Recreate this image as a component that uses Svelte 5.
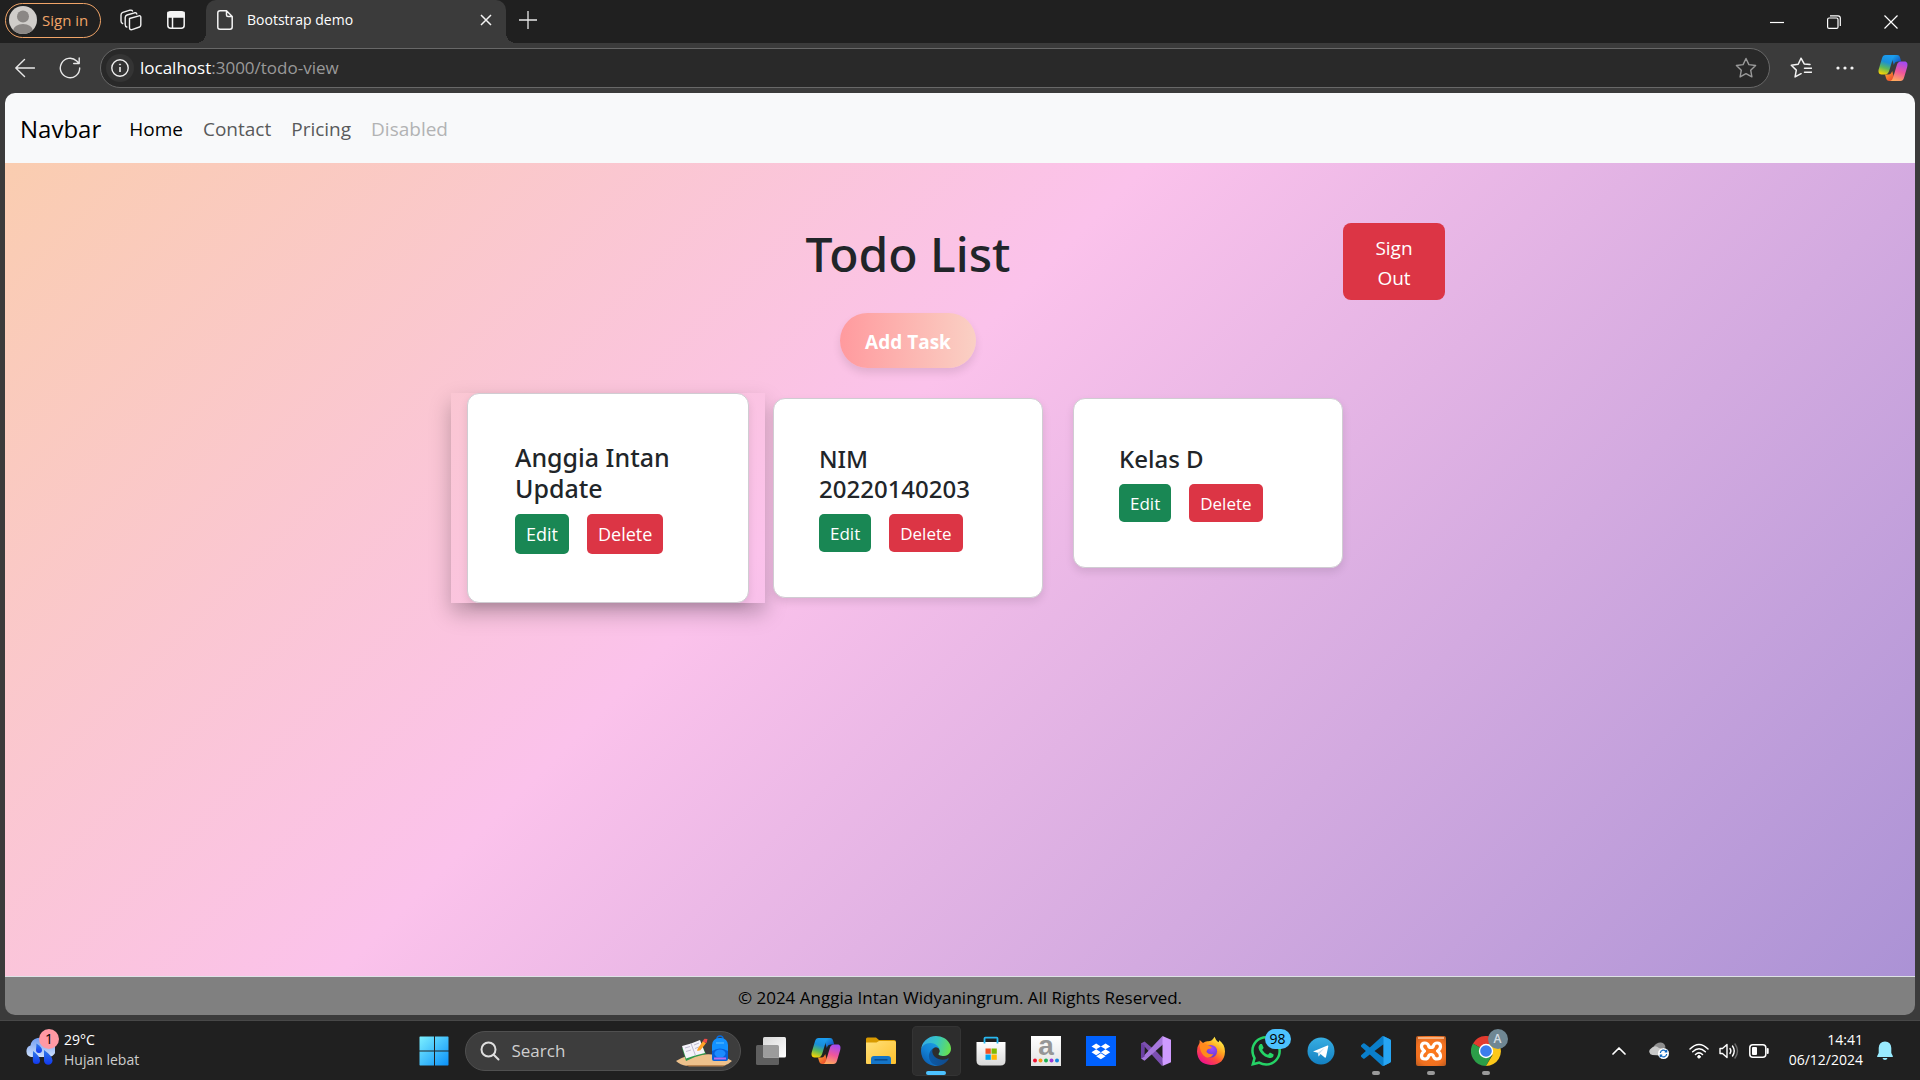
<script>
  const navLinks = [
    { label: 'Home', state: 'active' },
    { label: 'Contact', state: '' },
    { label: 'Pricing', state: '' },
    { label: 'Disabled', state: 'disabled' }
  ];
  const tasks = [
    { title: 'Anggia Intan Update', lifted: true },
    { title: 'NIM 20220140203', lifted: false },
    { title: 'Kelas D', lifted: false }
  ];
</script>

{#snippet copilot(id)}
  <svg class="copilot" viewBox="0 0 30 28" aria-hidden="true">
    <defs>
      <linearGradient id="{id}a" x1="0.5" y1="0" x2="0.2" y2="1">
        <stop offset="0" stop-color="#1b9cf0" /><stop offset=".35" stop-color="#1a8fd8" />
        <stop offset=".65" stop-color="#5cb85a" /><stop offset="1" stop-color="#ffd400" />
      </linearGradient>
      <linearGradient id="{id}b" x1="0.6" y1="0" x2="0.3" y2="1">
        <stop offset="0" stop-color="#a64af0" /><stop offset=".5" stop-color="#f0569a" />
        <stop offset="1" stop-color="#ffac5c" />
      </linearGradient>
      <linearGradient id="{id}c" x1="0" y1="0" x2="1" y2="1">
        <stop offset="0" stop-color="#1cb7f2" /><stop offset="1" stop-color="#1238b8" />
      </linearGradient>
      <linearGradient id="{id}d" x1="0" y1="0" x2="1" y2="1">
        <stop offset="0" stop-color="#ffb02e" /><stop offset="1" stop-color="#e6342e" />
      </linearGradient>
    </defs>
    <path d="M13 1h6c2 0 2.600 1 3.200 3l1 3.500H20c-2 0-3.500 1-4.200 3.500L14 5z" fill="url(#{id}c)" />
    <path d="M17 27h-5.500c-2.200 0-2.900-1-3.500-3l-1-3.600h3.500c2 0 3-1.400 3.700-3.400L16 23z" fill="url(#{id}d)" />
    <path d="M7.500 1H18c-1.800.3-2.600 2-3.300 4.300l-3.500 11.500c-.7 2.400-2 3.600-4.200 3.600H3.400C.8 20.400 0 18 .8 15L4 4.200C4.700 2 5.800 1 7.500 1z" fill="url(#{id}a)" />
    <path d="M22.500 27H12c1.800-.3 2.600-2 3.300-4.300l3.500-11.500c.7-2.400 2-3.600 4.200-3.600h3.600c2.600 0 3.400 2.400 2.600 5.400L26 23.800c-.7 2.200-1.800 3.200-3.500 3.200z" fill="url(#{id}b)" />
  </svg>
{/snippet}

<div class="desktop">
  <header class="tabstrip">
    <button class="signin">
      <svg viewBox="0 0 28 28" width="28" height="28" aria-hidden="true">
        <clipPath id="face"><circle cx="14" cy="14" r="14" /></clipPath>
        <g clip-path="url(#face)">
          <rect width="28" height="28" fill="#d0cdca" />
          <circle cx="14" cy="10.500" r="6" fill="#8b8785" />
          <ellipse cx="14" cy="25" rx="10" ry="7" fill="#8b8785" />
        </g>
      </svg>
      <span>Sign in</span>
    </button>
    <button class="bare workspaces" aria-label="Workspaces">
      <svg viewBox="0 0 22 22" width="22" height="22" fill="none" stroke="#f0f0f0" stroke-width="1.400" stroke-linejoin="round" stroke-linecap="round">
        <path d="M9.500 9.500 L19 6.800 Q20.800 6.500 20.800 8.300 V16 Q20.800 17.400 19.500 18 L12 20.600 Q9.500 21.200 9.500 18.500z" />
        <path d="M6.800 18 Q5.200 17.600 5.200 15.500 V8.500 Q5.200 6.800 7 6 L14.500 3.800 Q16.500 3.300 16.800 5" />
        <path d="M2.600 14.500 Q1 14 1 12 V6 Q1 4 2.800 3.400 L10 1.200 Q12 .8 12.500 2" />
      </svg>
    </button>
    <button class="bare actions" aria-label="Tab actions menu">
      <svg viewBox="0 0 18 18" width="18" height="18" fill="none" stroke="#f4f4f4" stroke-width="1.500">
        <rect x=".8" y=".8" width="16.400" height="16.400" rx="3" />
        <path d="M1 1.500h16v4.500h-16z" fill="#f4f4f4" /><path d="M5.500 6v11" />
      </svg>
    </button>
    <div class="tab">
      <svg viewBox="0 0 16 20" width="16" height="20" fill="none" stroke="#f4f4f4" stroke-width="1.500" stroke-linejoin="round" aria-hidden="true">
        <path d="M3 .8h6.500L15.200 6.500V17q0 2.200-2.200 2.200H3Q.8 19.200.8 17V3Q.8.8 3 .8zM9.500 1v4q0 1.500 1.500 1.500h4" />
      </svg>
      <span>Bootstrap demo</span>
      <button class="bare" aria-label="Close tab">
        <svg viewBox="0 0 12 12" width="12" height="12" stroke="#f4f4f4" stroke-width="1.500"><path d="M1 1l10 10M11 1L1 11" /></svg>
      </button>
    </div>
    <button class="bare newtab" aria-label="New tab">
      <svg viewBox="0 0 18 18" width="18" height="18" stroke="#e8e8e8" stroke-width="1.300"><path d="M9 0v18M0 9h18" /></svg>
    </button>
    <div class="window-controls">
      <button class="bare" aria-label="Minimize"><svg viewBox="0 0 14 14" width="14" height="14" stroke="#fff" stroke-width="1.200"><path d="M0 7.500h14" /></svg></button>
      <button class="bare" aria-label="Restore"><svg viewBox="0 0 14 14" width="14" height="14" stroke="#fff" stroke-width="1.200" fill="none"><rect x=".6" y="3" width="10.400" height="10.400" rx="1.500" /><path d="M3 .8h8q2.300 0 2.300 2.300v8" /></svg></button>
      <button class="bare" aria-label="Close"><svg viewBox="0 0 14 14" width="14" height="14" stroke="#fff" stroke-width="1.200"><path d="M.5.500l13 13M13.500.500l-13 13" /></svg></button>
    </div>
  </header>

  <div class="toolbar">
    <button class="bare" aria-label="Back">
      <svg viewBox="0 0 20 20" width="20" height="20" stroke="#e8e8e8" stroke-width="1.400" fill="none" stroke-linecap="round" stroke-linejoin="round"><path d="M19.500 10H.8M9.500 1.500L.8 10l8.700 8.500" /></svg>
    </button>
    <button class="bare refresh" aria-label="Refresh">
      <svg viewBox="0 0 22 22" width="22" height="22" stroke="#e8e8e8" stroke-width="1.400" fill="none" stroke-linecap="round" stroke-linejoin="round"><path d="M20.700 11a9.700 9.700 0 1 1-3-7l2.300 2.300M20.200 1v5.500h-5.500" /></svg>
    </button>
    <div class="address">
      <button class="info" aria-label="View site information">
        <svg viewBox="0 0 18 18" width="18" height="18" fill="none" stroke="#f0f0f0" stroke-width="1.400"><circle cx="9" cy="9" r="8.200" /><path d="M9 8v5" stroke-width="1.600" /><circle cx="9" cy="5.500" r=".6" fill="#f0f0f0" stroke-width=".8" /></svg>
      </button>
      <a class="url" href="#top" aria-label="localhost:3000/todo-view"><b>localhost</b>:3000/todo-view</a>
      <button class="bare" aria-label="Add to favorites">
        <svg viewBox="0 0 22 22" width="22" height="22" fill="none" stroke="#9a9a9a" stroke-width="1.400" stroke-linejoin="round"><path d="M11 1.500l2.900 6.100 6.700.9-4.900 4.700 1.200 6.700-5.900-3.200-5.900 3.200 1.200-6.700L1.400 8.500l6.700-.9z" /></svg>
      </button>
    </div>
    <div class="tools">
      <button class="bare" aria-label="Favorites">
        <svg viewBox="0 0 22 22" width="22" height="22" fill="none" stroke="#f4f4f4" stroke-width="1.500" stroke-linejoin="round" stroke-linecap="round"><path d="M20 7.500l-5.800-.6L11 1.200 8.200 7.300l-6.900 1 5 4.800-1.200 6.800 6-3.200M14.500 11.200h7M14.500 15.200h7" /></svg>
      </button>
      <button class="bare" aria-label="Settings and more">
        <svg viewBox="0 0 18 4" width="18" height="4" fill="#f4f4f4"><circle cx="2" cy="2" r="1.600" /><circle cx="9" cy="2" r="1.600" /><circle cx="16" cy="2" r="1.600" /></svg>
      </button>
      <button class="bare" aria-label="Copilot">{@render copilot('side')}</button>
    </div>
  </div>

  <div class="page" id="top">
    <nav class="navbar">
      <a class="brand" href="#top">Navbar</a>
      {#each navLinks as link}
        <a class="nav-link {link.state}" href="#top">{link.label}</a>
      {/each}
    </nav>
    <main>
      <div class="container">
        <section class="board">
          <h1>Todo List</h1>
          <button class="add">Add Task</button>
          <div class="cards">
            {#each tasks as task}
              <div class="column" class:lifted={task.lifted}>
                <article class="card">
                  <h2>{task.title}</h2>
                  <div class="buttons">
                    <button class="btn edit">Edit</button>
                    <button class="btn delete">Delete</button>
                  </div>
                </article>
              </div>
            {/each}
          </div>
        </section>
        <button class="signout">Sign Out</button>
      </div>
    </main>
    <footer>© 2024 Anggia Intan Widyaningrum. All Rights Reserved.</footer>
  </div>

  <div class="taskbar">
    <button class="weather">
      <span class="weather-icon">
        <svg viewBox="0 0 30 28" width="30" height="28" aria-hidden="true">
          <defs>
            <linearGradient id="cloud" x1="0" y1="0" x2="0" y2="1"><stop offset="0" stop-color="#6f9cf2" /><stop offset="1" stop-color="#cfe0fb" /></linearGradient>
            <linearGradient id="drop" x1="0" y1="0" x2="0" y2="1"><stop offset="0" stop-color="#2e7ae8" /><stop offset="1" stop-color="#1238f0" /></linearGradient>
          </defs>
          <path d="M6 20a6 6 0 0 1-.5-11.500A9 9 0 0 1 22 5a7.500 7.500 0 0 1 2.500 15z" fill="url(#cloud)" />
          <path d="M8 14q7 5 7 9.500a3.600 3.600 0 0 1-7.200 0z" fill="url(#drop)" />
          <path d="M19 13q8.500 6 8.500 10.500a4.200 4.200 0 0 1-8.500 0z" fill="url(#drop)" />
          <path d="M11.500 6.500q5.500 3.500 5.500 6.500a3 3 0 0 1-6 0z" fill="url(#drop)" />
        </svg>
        <span class="badge alert">1</span>
      </span>
      <span class="lines"><span>29°C</span><span class="dim">Hujan lebat</span></span>
    </button>

    <div class="apps">
      <button class="app" aria-label="Start">
        <svg viewBox="0 0 30 30" width="30" height="30">
          <defs><linearGradient id="win" x1="0" y1="0" x2="1" y2="1"><stop offset="0" stop-color="#7cf0ff" /><stop offset="1" stop-color="#0a90f8" /></linearGradient></defs>
          <path fill="url(#win)" d="M1 .5h14v14H.5V1zM16 .5h13l.5.500v13.500H16zM.5 15.500H15v14H1l-.5-.5zM16 15.500h13.500V29l-.5.500H16z" />
        </svg>
      </button>
      <label class="search">
        <svg viewBox="0 0 20 20" width="20" height="20" fill="none" stroke="#dedede" stroke-width="2" stroke-linecap="round" aria-hidden="true"><circle cx="8.500" cy="8.500" r="7" /><path d="M13.700 13.700l4.800 4.800" /></svg>
        <input type="text" placeholder="Search" aria-label="Search" />
        <svg viewBox="0 0 58 32" width="58" height="32" aria-hidden="true">
          <path d="M1 26Q14 18 28 19.500 46 18 57 26 53 30 48 31H12Q5 30 1 26z" fill="#edc18c" />
          <path d="M10 30h41l-3 1.500H14z" fill="#b98450" />
          <path d="M7 13l10-2 8-5 6 13-11 3-9 4z" fill="#2f9a4c" />
          <path d="M7 11l9-2.500L25 5l5 13-10 2.500-9 3z" fill="#f5f3fa" />
          <path d="M16 8.500l4.500 12M10 13l5-1.500M11 16.500l5-1.500M19 10l5-2M20 13.500l5-2" stroke="#b8b3cc" stroke-width=".9" />
          <path d="M22.500 14L28 6l3 2.300-5.600 6.900-3.200.8z" fill="#ffa326" /><path d="M27.500 6.500l2-2.700 3 .3-.9 4z" fill="#f04c48" />
          <path d="M42 4q0-3 3-3t3 3" fill="none" stroke="#0b6ad8" stroke-width="1.500" />
          <rect x="37" y="3" width="16" height="23" rx="7" fill="#1291ff" /><path d="M37 16q8-5 16 0v8q0 2-2 2H39q-2 0-2-2z" fill="#0760dc" />
          <ellipse cx="45" cy="18.500" rx="5.500" ry="4" fill="#1c8bff" /><path d="M39 22.500h12v2H39z" fill="#b46cf0" /><path d="M41 8h8" stroke="#63c4ff" />
        </svg>
      </label>
      <button class="app" aria-label="Task view">
        <svg viewBox="0 0 30 28" width="30" height="28">
          <defs><linearGradient id="tv" x1="0" y1="0" x2="1" y2="1"><stop offset="0" stop-color="#d8d8d8" /><stop offset="1" stop-color="#fff" /></linearGradient></defs>
          <rect y="8" width="23" height="20" rx="1.500" fill="#5f5f5f" /><rect x="7" width="23" height="20.500" rx="1.500" fill="url(#tv)" /><path d="M7 8h14.500q1.500 0 1.500 1.500v11H8.500Q7 20.500 7 19z" fill="#9c9c9c" />
        </svg>
      </button>
      <button class="app" aria-label="Copilot">{@render copilot('dock')}</button>
      <button class="app" aria-label="File Explorer">
        <svg viewBox="0 0 30 27" width="30" height="27">
          <defs><linearGradient id="fold" x1="0" y1="0" x2="1" y2="1"><stop offset="0" stop-color="#ffe07a" /><stop offset="1" stop-color="#ffc12c" /></linearGradient></defs>
          <path d="M0 2q0-1.500 1.500-1.500h8.500l3 2.500H28q2 0 2 2v6H0z" fill="#d99a00" />
          <path d="M0 5.500h10.500L13 4h15.500Q30 4 30 5.500V26q0 .9-1 .9H1q-1 0-1-.9z" fill="url(#fold)" />
          <path d="M5 27v-5q0-3 3-3h14q3 0 3 3v5z" fill="#1575c8" /><path d="M8.500 22.800h13" stroke="#0a4a8c" stroke-width="1.500" />
        </svg>
      </button>
      <button class="app current" aria-label="Microsoft Edge">
        <svg viewBox="0 0 256 256" width="30" height="30">
          <defs>
            <linearGradient id="e1" x1=".1" y1=".6" x2="1" y2=".6"><stop offset="0" stop-color="#0c59a4" /><stop offset="1" stop-color="#114a8b" /></linearGradient>
            <linearGradient id="e2" x1=".9" y1=".1" x2=".3" y2="1"><stop offset="0" stop-color="#1b9de2" /><stop offset=".5" stop-color="#1383d6" /><stop offset="1" stop-color="#0b5db0" /></linearGradient>
            <linearGradient id="e3" x1="0" y1=".3" x2="1" y2=".5"><stop offset="0" stop-color="#35a8e8" /><stop offset=".5" stop-color="#36c6c4" /><stop offset="1" stop-color="#68e04e" /></linearGradient>
          </defs>
          <path fill="url(#e1)" d="M231 190.500c-3.400 1.800-6.900 3.400-10.500 4.700a101.800 101.800 0 0 1-35.900 6.400c-47.300 0-88.500-32.500-88.500-74.300a31.500 31.500 0 0 1 16.400-27.300c-42.800 1.800-53.800 46.400-53.800 72.500 0 73.900 68.100 81.400 82.800 81.400 7.900 0 19.800-2.300 27-4.600l1.300-.4a128.300 128.300 0 0 0 66.600-52.800 4 4 0 0 0-5.400-5.600z" />
          <path fill="url(#e2)" d="M105.700 241.400a79.200 79.200 0 0 1-22.700-21.300 80.700 80.700 0 0 1 29.500-120c3.200-1.500 8.500-4.100 15.600-4a32.400 32.400 0 0 1 25.700 13 31.900 31.900 0 0 1 6.300 18.700c0-.2 24.500-79.600-80-79.600-43.900 0-80 41.600-80 78.200a130.200 130.200 0 0 0 12.100 56 128 128 0 0 0 156.400 67 75.500 75.500 0 0 1-62.800-8z" />
          <path fill="url(#e3)" d="M152.300 148.900c-.8 1-3.300 2.500-3.300 5.700 0 2.600 1.700 5.100 4.700 7.200 14.400 10 41.500 8.700 41.600 8.700a59.600 59.600 0 0 0 30.300-8.300 61.400 61.400 0 0 0 30.400-52.900c.3-22.400-8-37.300-11.300-43.900C223.500 23.900 177.700 0 128 0A128 128 0 0 0 0 126.200c.5-36.500 36.800-66 80-66 3.500 0 23.500.3 42 10a72.600 72.600 0 0 1 30.900 29.300c6.100 10.600 7.200 24.100 7.200 29.500s-2.700 13.300-7.800 19.900z" />
        </svg>
      </button>
      <button class="app" aria-label="Microsoft Store">
        <svg viewBox="0 0 30 30" width="30" height="30">
          <defs><linearGradient id="bag" x1="0" y1="0" x2="0" y2="1"><stop offset="0" stop-color="#fff" /><stop offset="1" stop-color="#d9d9d9" /></linearGradient></defs>
          <path d="M.5 6h29v18.500q0 5-5 5h-19q-5 0-5-5z" fill="url(#bag)" />
          <path d="M8.500 7.500V2.500q0-.8.800-.8h11.400q.8 0 .8.800v5" fill="none" stroke="#28b8f0" stroke-width="1.800" />
          <path d="M9.500 12.500h5.300v5.300H9.500z" fill="#f25022" /><path d="M15.500 12.500h5.300v5.300h-5.300z" fill="#7fba00" /><path d="M9.500 18.500h5.300v5.300H9.500z" fill="#00a4ef" /><path d="M15.500 18.500h5.300v5.300h-5.300z" fill="#ffb900" />
        </svg>
      </button>
      <button class="app" aria-label="Amazon">
        <svg class="a-tile" viewBox="0 0 30 30" width="30" height="30">
          <defs><linearGradient id="tile" x1="0" y1="0" x2="0" y2="1"><stop offset="0" stop-color="#fff" /><stop offset="1" stop-color="#e2e2e2" /></linearGradient></defs>
          <rect width="30" height="30" fill="url(#tile)" />
          <text class="a-logo" x="15" y="19" text-anchor="middle">a</text>
          <circle cx="4" cy="24.500" r="2" fill="#f01030" /><circle cx="9.500" cy="24.500" r="2" fill="#f59a18" /><circle cx="15" cy="24.500" r="2" fill="#1bb050" /><circle cx="20.500" cy="24.500" r="2" fill="#9a3ad8" /><circle cx="26" cy="24.500" r="2" fill="#1488e0" />
        </svg>
      </button>
      <button class="app" aria-label="Dropbox">
        <svg viewBox="0 0 30 30" width="30" height="30">
          <rect width="30" height="30" fill="#0061fe" />
          <path transform="translate(5.500 6) scale(.78)" fill="#fff" d="M6 1.807L0 5.629l6 3.822 6.001-3.822L6 1.807zM18 1.807l-6 3.822 6 3.822 6-3.822-6-3.822zM0 13.274l6 3.822 6.001-3.822L6 9.452l-6 3.822zM18 9.452l-6 3.822 6 3.822 6-3.822-6-3.822zM6 18.371l6.001 3.822 6-3.822-6-3.822L6 18.371z" />
        </svg>
      </button>
      <button class="app" aria-label="Visual Studio">
        <svg viewBox="0 0 30 30" width="30" height="30">
          <path d="M0 7.500l3.500-2L16 16l6.500 7-1.500 7L3.500 10.500 3 20 0 22z" fill="#7b4fb0" />
          <path d="M0 22.500l3.500 2.200L23 7.500 21.500 0 3 19.500z" fill="#a678dc" />
          <path d="M0 7.500l3.500 1.800v11.400L0 22.500z" fill="#6a3fa2" />
          <path d="M21.500 0L30 3.800v22.400L21.500 30z" fill="#cf9bff" />
        </svg>
      </button>
      <button class="app" aria-label="Firefox">
        <svg viewBox="0 0 30 30" width="30" height="30">
          <defs>
            <linearGradient id="fox" x1=".85" y1=".1" x2=".25" y2=".95"><stop offset="0" stop-color="#fff24a" /><stop offset=".35" stop-color="#ffa51f" /><stop offset=".65" stop-color="#ff4f3a" /><stop offset="1" stop-color="#f0128c" /></linearGradient>
            <radialGradient id="globe" cx=".6" cy=".3" r=".8"><stop offset="0" stop-color="#a04cff" /><stop offset="1" stop-color="#5a35c8" /></radialGradient>
          </defs>
          <path d="M18.500.8q1 3 3.800 5.500 1-.6.800-2Q28.800 8 29 15.500 28.500 28.500 15 29 1.500 28 1 15.500.9 10.500 3.500 7l.2-3 3.300 3q2.500-2 5-1.700Q16 5.500 18.500.8z" fill="url(#fox)" />
          <circle cx="14.800" cy="15.300" r="6.300" fill="url(#globe)" />
          <path d="M3.500 8Q8 6.500 12 9.500q3 .5 4 2-1.500 1.500-4 1.500-1.500 1.500-1.500 3Q13 19 17.500 18q-3 5-8 3Q4 18 3.500 8z" fill="#ff8a1c" />
        </svg>
      </button>
      <button class="app" aria-label="WhatsApp, 98 unread">
        <svg viewBox="0 0 24 24" width="30" height="30"><path fill="#25d366" d="M17.472 14.382c-.297-.149-1.758-.867-2.030-.967-.273-.099-.471-.148-.67.150-.197.297-.767.966-.94 1.164-.173.199-.347.223-.644.075-.297-.15-1.255-.463-2.390-1.475-.883-.788-1.480-1.761-1.653-2.059-.173-.297-.018-.458.13-.606.134-.133.298-.347.446-.52.149-.174.198-.298.298-.497.099-.198.050-.371-.025-.52-.075-.149-.669-1.612-.916-2.207-.242-.579-.487-.5-.669-.51-.173-.008-.371-.01-.57-.01-.198 0-.52.074-.792.372-.272.297-1.040 1.016-1.040 2.479 0 1.462 1.065 2.875 1.213 3.074.149.198 2.096 3.200 5.077 4.487.709.306 1.262.489 1.694.625.712.227 1.360.195 1.871.118.571-.085 1.758-.719 2.006-1.413.248-.694.248-1.289.173-1.413-.074-.124-.272-.198-.57-.347m-5.421 7.403h-.004a9.870 9.870 0 0 1-5.031-1.378l-.361-.214-3.741.982.998-3.648-.235-.374a9.860 9.860 0 0 1-1.510-5.260c.001-5.450 4.436-9.884 9.888-9.884 2.640 0 5.122 1.030 6.988 2.898a9.825 9.825 0 0 1 2.893 6.994c-.003 5.450-4.437 9.884-9.885 9.884m8.413-18.297A11.815 11.815 0 0 0 12.050 0C5.495 0 .16 5.335.157 11.892c0 2.096.547 4.142 1.588 5.945L.057 24l6.305-1.654a11.882 11.882 0 0 0 5.683 1.448h.005c6.554 0 11.890-5.335 11.893-11.893a11.821 11.821 0 0 0-3.480-8.413z" /></svg>
        <span class="badge unread">98</span>
      </button>
      <button class="app" aria-label="Telegram">
        <svg viewBox="0 0 28 28" width="28" height="28">
          <defs><linearGradient id="tg" x1="0" y1="0" x2="0" y2="1"><stop offset="0" stop-color="#37aee2" /><stop offset="1" stop-color="#1380c2" /></linearGradient></defs>
          <circle cx="14" cy="14" r="13.500" fill="url(#tg)" /><path d="M6 14.500L20.500 8.500q1-.3.800.8L19 20q-.3 1-1.300.5L13.500 17l-1.800 2.500-.9-3.800z" fill="#fff" /><path d="M10.800 15.700l7-5-5 5.500-1.100 3.300z" fill="#c2dcee" />
        </svg>
      </button>
      <button class="app running" aria-label="Visual Studio Code">
        <svg viewBox="0 0 24 24" width="30" height="30">
          <path fill="#0a7fcb" d="M23.150 2.587L18.210.210a1.494 1.494 0 0 0-1.705.290l-9.460 8.630-4.120-3.128a.999.999 0 0 0-1.276.057L.327 7.261A1 1 0 0 0 .326 8.740L3.899 12 .326 15.260a1 1 0 0 0 .001 1.479L1.650 17.940a.999.999 0 0 0 1.276.057l4.120-3.128 9.460 8.630a1.492 1.492 0 0 0 1.704.290l4.942-2.377A1.500 1.500 0 0 0 24 20.060V3.939a1.500 1.500 0 0 0-.85-1.352zm-5.146 14.861L10.826 12l7.178-5.448v10.896z" />
          <path fill="#27a5f3" d="M18 .1l5.150 2.487q.85.400.85 1.352V20.060q0 .94-.85 1.350L18 23.900z" />
        </svg>
      </button>
      <button class="app running" aria-label="XAMPP Control Panel">
        <svg viewBox="0 0 30 30" width="30" height="30">
          <defs><radialGradient id="xa" cx=".5" cy=".5" r=".7"><stop offset="0" stop-color="#ff7c1c" /><stop offset=".7" stop-color="#f07020" /><stop offset="1" stop-color="#b85a20" /></radialGradient></defs>
          <rect width="30" height="30" rx="2" fill="url(#xa)" /><path d="M2 1h26v2H2z" fill="#f4b080" />
          <path d="M12.500 9.500Q11.500 7 8.800 7 5.500 7 5.500 10.500q0 2.500 3 4.500-3 2-3 5 0 3 3.500 3 2.700 0 3.500-2.500.5-2 2.500-2t2.500 2Q18.300 23 21 23q3.500 0 3.500-3 0-3-3-5 3-2 3-4.500Q24.500 7 21.200 7q-2.700 0-3.700 2.500-.5 2-2.500 2t-2.500-2z" fill="none" stroke="#fff" stroke-width="3.200" stroke-linejoin="round" />
        </svg>
      </button>
      <button class="app running" aria-label="Google Chrome">
        <svg viewBox="0 0 30 30" width="30" height="30">
          <path d="M15 15L2 7.500A15 15 0 0 1 28 7.500z" fill="#e33b2e" /><path d="M15 15H15L2 7.500A15 15 0 0 0 15 30l6.200-11.500z" fill="#2b9e48" /><path d="M15 8h13.200A15 15 0 0 1 15 30l6.500-11z" fill="#fcc81a" />
          <circle cx="15" cy="15" r="7.200" fill="#fff" /><circle cx="15" cy="15" r="5.800" fill="#3b7ded" />
        </svg>
        <span class="badge profile">A</span>
      </button>
    </div>

    <div class="tray">
      <button class="bare chevron" aria-label="Show hidden icons"><svg viewBox="0 0 14 8" width="14" height="8" fill="none" stroke="#fff" stroke-width="1.700" stroke-linecap="round" stroke-linejoin="round"><path d="M1 7l6-6 6 6" /></svg></button>
      <button class="bare cloud" aria-label="OneDrive">
        <svg viewBox="0 0 20 17" width="20" height="17">
          <path d="M5 4Q8 0 12 .5q4 .5 4.500 5L6 9z" fill="#8e8e8e" /><path d="M3.500 13A3.500 3.500 0 0 1 2 6.500Q6 2.500 10 6l8 2-6 5.500z" fill="#c9c9c9" />
          <circle cx="14.500" cy="11.500" r="5.500" fill="#fff" /><path d="M11.300 11a3.300 3.300 0 0 1 6-1.500M17.700 12a3.300 3.300 0 0 1-6 1.500M17.700 7.800v2h-2M11.300 15.200v-2h2" fill="none" stroke="#0c66c0" stroke-width="1.200" />
        </svg>
      </button>
      <button class="bare status" aria-label="Network, volume and battery">
        <svg viewBox="0 0 20 16" width="20" height="16" fill="none" stroke="#fff" stroke-width="1.500" stroke-linecap="round"><path d="M1 6q9-9 18 0M3.700 8.800q6.300-6 12.600 0M6.500 11.500q3.500-3.300 7 0" /><circle cx="10" cy="13.800" r="1.300" fill="#fff" stroke-width="1" /></svg>
        <svg viewBox="0 0 20 16" width="20" height="16" fill="none" stroke="#fff" stroke-width="1.400" stroke-linecap="round" stroke-linejoin="round"><path d="M1 5.500v5h2.500l4.500 4V1.500l-4.500 4zM11 5.500q1.800 2.500 0 5M13.500 3q3.500 5 0 10" /><path d="M16 1q5 7 0 14" stroke="#6a6a6a" /></svg>
        <svg viewBox="0 0 20 14" width="20" height="14" fill="none" stroke="#fff" stroke-width="1.500"><rect x=".8" y=".8" width="16" height="12.400" rx="3" /><rect x="3" y="3" width="5" height="8" rx="1" fill="#fff" stroke="none" /><path d="M18.700 5v4" stroke-width="2" stroke-linecap="round" /></svg>
      </button>
      <button class="clock lines"><span>14:41</span><span>06/12/2024</span></button>
      <button class="bare" aria-label="Notifications"><svg viewBox="0 0 16 20" width="16" height="20" fill="#99ebff"><path d="M8 .5q6 .3 6.300 6.500v5l1.500 3q.3 1-.8 1H1q-1.100 0-.8-1l1.500-3V7Q2 .8 8 .5zM5.500 17h5q-.5 2-2.500 2t-2.500-2z" /></svg></button>
    </div>
  </div>
</div>

<style>
  :global(body) { margin: 0; background: #3b3b3b; }
  .desktop, .desktop button, .desktop input { font-family: "Open Sans", "Noto Sans", sans-serif; }
  .desktop { min-height: 100vh; display: flex; flex-direction: column; background: #3b3b3b; color: #fff; }
  .desktop * { box-sizing: border-box; }
  button { border: 0; padding: 0; margin: 0; color: inherit; background: none; }
  a { color: inherit; text-decoration: none; }
  svg { display: block; flex: none; }
  .bare { display: flex; align-items: center; justify-content: center; }

  .tabstrip { height: 43px; background: #202020; display: flex; align-items: center; padding-left: 5px; }
  .signin { height: 35px; width: 96px; margin-bottom: 3px; border: 1px solid #f0a468; border-radius: 18px; color: #f0a468; display: flex; align-items: center; gap: 5px; padding-left: 3px; font-size: 15px; white-space: nowrap; }
  .workspaces { margin-left: 19px; margin-bottom: 3px; }
  .actions { margin-left: 25px; margin-bottom: 3px; }
  .tab { position: relative; width: 300px; height: 43px; margin-left: 21px; padding: 0 14px 4px 11px; border-radius: 10px 10px 0 0; background: #3b3b3b; display: flex; align-items: center; gap: 14px; font-size: 14px; }
  .tab::before, .tab::after { content: ""; position: absolute; bottom: 0; width: 10px; height: 10px; }
  .tab::before { right: 100%; background: radial-gradient(circle at 0 0, transparent 10px, #3b3b3b 10px); }
  .tab::after { left: 100%; background: radial-gradient(circle at 100% 0, transparent 10px, #3b3b3b 10px); }
  .tab span { flex: 1; }
  .newtab { margin-left: 13px; margin-bottom: 4px; }
  .window-controls { margin-left: auto; margin-right: 1px; display: flex; }
  .window-controls .bare { width: 57px; height: 42px; }

  .toolbar { height: 50px; display: flex; align-items: center; padding: 0 12px 0 15px; }
  .refresh { margin-left: 24px; }
  .address { flex: 1; height: 40px; margin-left: 19px; padding: 0 12px 0 5px; border: 1px solid #686868; border-radius: 20px; background: #292929; display: flex; align-items: center; }
  .info { width: 28px; height: 28px; border-radius: 14px; background: #343434; display: flex; align-items: center; justify-content: center; }
  .url { flex: 1; margin-left: 6px; padding-bottom: 2px; font-size: 17px; color: #999; }
  .url b { font-weight: 400; color: #fff; }
  .tools { display: flex; align-items: center; gap: 24px; margin-left: 20px; }
  .copilot { width: 30px; height: 28px; }

  .page { flex: 1; margin: 0 5px 5px; border-radius: 10px; overflow: hidden; display: flex; flex-direction: column; color: #212529; }
  .navbar { height: 70px; background: #f8f9fa; display: flex; align-items: center; padding: 0 15px; font-size: 19px; }
  .brand { font-size: 24px; color: #000; margin-right: 18px; }
  .nav-link { padding: 11px 10px 10px; color: #595a5b; }
  .nav-link.active { color: #000; }
  .nav-link.disabled { color: #b2b3b4; }

  main { flex: 1; padding: 60px 21px 60px 19px; background: linear-gradient(135deg, #facdb0 0%, #fbc2eb 42%, #ab92d5 100%); }
  .container { max-width: 972px; margin: 0 auto; display: flex; align-items: flex-start; }
  .board { flex: 1; display: flex; flex-direction: column; align-items: center; }
  h1, h2 { font-family: "Noto Sans", "Open Sans", sans-serif; font-weight: 500; }
  h1 { margin: 0 0 30px; font-size: 48px; line-height: 60px; padding-top: 1px; margin-bottom: 29px; }
  .add { height: 55px; padding: 2px 25px 0; border-radius: 28px; background: linear-gradient(90deg, #ff9a9e, #fad0c4); color: #fff; font-size: 19px; font-weight: 700; box-shadow: 0 5px 8px rgba(0, 0, 0, .1); }
  .signout { width: 102px; padding: 10px 16px 7px; border-radius: 8px; background: #dc3545; color: #fff; font-size: 19px; line-height: 30px; }
  .cards { align-self: stretch; margin-top: 30px; display: grid; grid-template-columns: repeat(3, 1fr); gap: 30px; align-items: start; }
  .card { border: 1px solid #d0ccd2; border-radius: 12px; background: #fff; padding: 45px; box-shadow: 0 4px 8px rgba(0, 0, 0, .1); }
  .card h2 { margin: 0 0 10px; font-size: 24px; line-height: 30px; }
  .buttons { display: flex; gap: 18px; }
  .btn { height: 38px; padding: 0 11px; border-radius: 5px; color: #fff; font-size: 17px; }
  .edit { background: #198754; }
  .delete { background: #dc3545; }
  .lifted { margin: -5px -22px; padding: 0 16px; box-shadow: 0 10px 20px rgba(0, 0, 0, .25); }
  .lifted .card { padding: 48px 47px; }
  .lifted h2 { font-size: 25px; line-height: 31px; }
  .lifted .btn { height: 40px; font-size: 18px; }

  footer { height: 39px; border-top: 1px solid #dee2e6; background: #808080; color: #000; font-size: 17px; line-height: 41px; text-align: center; }

  .taskbar { height: 60px; border-top: 1px solid #484848; background: #202020; display: grid; grid-template-columns: 1fr auto 1fr; align-items: center; font-size: 14px; }
  .weather { justify-self: start; margin-left: 25px; display: flex; align-items: center; gap: 9px; text-align: left; }
  .weather-icon { position: relative; }
  .lines { display: flex; flex-direction: column; font-size: 14px; line-height: 20px; padding-bottom: 2px; }
  .dim { color: #cdcdcd; }
  .badge { position: absolute; display: flex; align-items: center; justify-content: center; border-radius: 10px; height: 20px; color: #000; }
  .alert { width: 20px; left: 14px; top: -8px; background: #ff99a4; font-size: 14px; }
  .apps { display: flex; align-items: center; gap: 6px; }
  .app { position: relative; width: 49px; height: 50px; display: flex; align-items: center; justify-content: center; border-radius: 5px; }
  .current { background: #2d2d2d; box-shadow: inset 0 0 0 1px #343434; }
  .current::after, .running::after { content: ""; position: absolute; bottom: 1px; left: 50%; width: 8px; height: 4px; margin-left: -4px; border-radius: 2px; background: #9a9a9a; }
  .current::after { width: 20px; margin-left: -10px; background: #4cc2ff; }
  .unread { width: 26px; left: 23px; top: 3px; background: #4cc2ff; font-size: 14px; }
  .profile { width: 20px; left: 26px; top: 3px; background: #6f8793; color: #d4dde2; font-size: 12px; font-weight: 600; }
  .search { width: 276px; height: 40px; border: 1px solid #505050; border-radius: 20px; background: #3d3d3d; display: flex; align-items: center; padding: 0 7px 0 14px; gap: 12px; }
  .search input { flex: 1; min-width: 0; border: 0; padding: 0; background: none; color: #fff; font-size: 17px; outline: none; }
  .search input::placeholder { color: #cfcfcf; opacity: 1; }
  .a-tile { overflow: visible; }
  .a-logo { font-family: "Liberation Sans", sans-serif; font-size: 28px; font-weight: 700; fill: #969696; }
  .tray { justify-self: end; display: flex; align-items: center; padding-right: 27px; }
  .cloud { margin-left: 23px; }
  .status { gap: 10px; margin-left: 20px; }
  .clock { margin-left: 20px; margin-right: 14px; text-align: right; }
</style>
